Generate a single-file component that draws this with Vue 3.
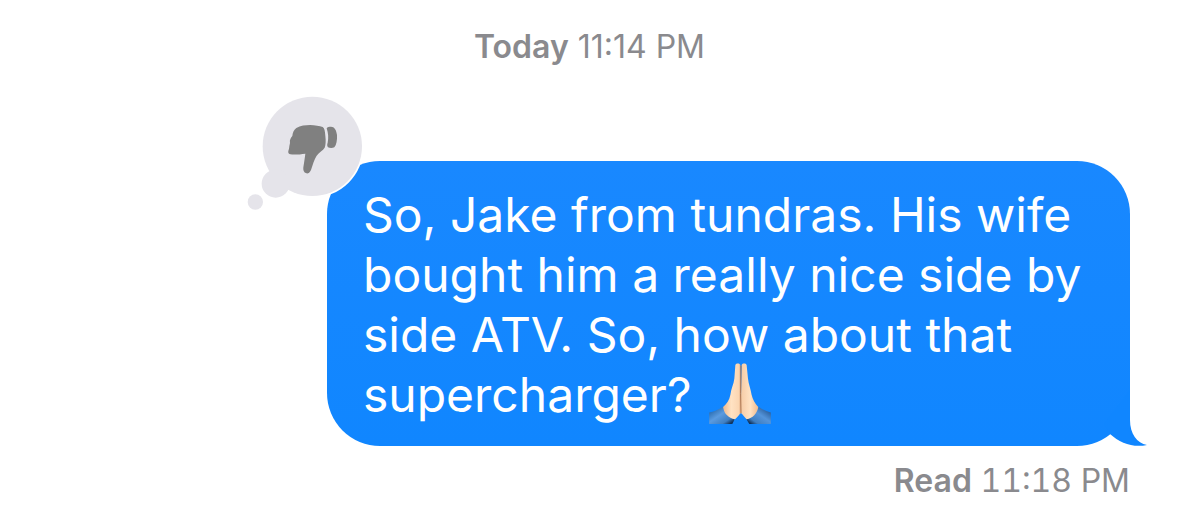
<script setup>
const lines = [
  'So, Jake from tundras. His wife',
  'bought him a really nice side by',
  'side ATV. So, how about that',
]
</script>

<template>
  <main class="thread">
    <header class="stamp"><strong>Today</strong> <time>11:14 PM</time></header>

    <article class="bubble">
      <p class="message">
        <template v-for="line in lines" :key="line">{{ line }}<br /></template>supercharger?
        <svg class="emoji" viewBox="60 38 186 187" role="img" aria-label="Folded hands">
          <defs>
            <linearGradient id="sleeveL" x1="0" y1="0" x2="1" y2="1">
              <stop offset="0.15" stop-color="#2b6db0" />
              <stop offset="0.45" stop-color="#5a9be0" />
              <stop offset="0.75" stop-color="#3f7fc2" />
              <stop offset="0.9" stop-color="#12335c" />
            </linearGradient>
            <linearGradient id="sleeveR" x1="1" y1="0" x2="0" y2="1">
              <stop offset="0.15" stop-color="#2a5f9c" />
              <stop offset="0.45" stop-color="#5494da" />
              <stop offset="0.75" stop-color="#3f7fc2" />
              <stop offset="0.9" stop-color="#12335c" />
            </linearGradient>
            <linearGradient id="skinL" x1="0" y1="0" x2="1" y2="0">
              <stop offset="0" stop-color="#efb98c" />
              <stop offset="0.45" stop-color="#ffe2c3" />
              <stop offset="0.85" stop-color="#fbd6b2" />
              <stop offset="1" stop-color="#dca47a" />
            </linearGradient>
            <linearGradient id="skinR" x1="1" y1="0" x2="0" y2="0">
              <stop offset="0" stop-color="#efb98c" />
              <stop offset="0.45" stop-color="#ffe2c3" />
              <stop offset="1" stop-color="#f6cba5" />
            </linearGradient>
          </defs>
          <path fill="url(#sleeveL)" d="M60 187C73 185 88 179 101 170C103 186 117 202 137 207L130 222H60Z" />
          <path fill="url(#sleeveR)" d="M246 187C233 184 220 179 209 170C206 186 192 201 172 207L181 222H246Z" />
          <path fill="url(#skinL)" d="M139 44C142 38 151 38 154 44L157 188C151 193 146 200 138 208C118 205 104 190 102 171C113 162 121 150 124 134C126 115 134 103 136 85Z" />
          <path fill="url(#skinR)" d="M158 44C161 38 170 38 173 44L177 85C179 103 185 115 188 134C191 147 198 161 208 171C205 191 191 205 173 208C166 200 161 193 155 188Z" />
          <path fill="none" stroke="#a87350" stroke-width="3" stroke-linecap="round" d="M156 47L155 130L156 188" />
        </svg>
      </p>

      <svg class="tail" viewBox="1100 390 50 56" aria-hidden="true">
        <path fill="#1086ff" d="M1130 390V420C1130 434 1137 443 1147 445C1133 448 1120 443 1110 434L1104 424Z" />
      </svg>

      <svg class="reaction" viewBox="0 0 480 420" role="img" aria-label="Disliked">
        <circle cx="232" cy="184" r="154" fill="#fff" />
        <g fill="#e5e4ea">
          <circle cx="232" cy="184" r="149" />
          <circle cx="122" cy="296" r="42" />
          <circle cx="61" cy="351" r="23" />
        </g>
        <g fill="#808080">
          <path d="M184 129C196 122 212 120 225 120C240 121 254 123 263 126C269 130 270 140 271 152C273 168 272 180 269 188C264 196 252 202 245 212C238 222 233 240 228 255C224 264 219 266 214 265C206 263 204 256 205 247C207 235 209 222 211 206C196 208 178 210 166 208C158 206 159 199 162 192C163 186 163 180 165 174C163 165 168 158 172 153C173 143 177 134 184 129Z" />
          <path d="M275 130C277 126 283 125 288 125C298 125 304 134 306 150C307 166 304 180 298 187C293 190 284 190 279 187C276 183 276 178 278 173C281 158 280 145 275 130Z" />
        </g>
      </svg>
    </article>

    <footer class="receipt"><strong>Read</strong> <time>11:18 PM</time></footer>
  </main>
</template>

<style>
body {
  margin: 0;
  background: #fff;
}
</style>

<style scoped>
.thread {
  display: flex;
  flex-direction: column;
  padding: 27px 49px 0;
  font-family: Inter, "Liberation Sans", sans-serif;
}

.stamp,
.receipt {
  color: #8a8a8e;
  font-size: 32px;
  line-height: 40px;
  white-space: nowrap;
}

.stamp {
  align-self: center;
}

.receipt {
  align-self: flex-end;
  margin-top: 15px;
  font-variant-numeric: tabular-nums;
}

strong {
  font-weight: 600;
}

.bubble {
  position: relative;
  align-self: flex-end;
  box-sizing: border-box;
  width: 803px;
  max-width: 100%;
  margin-top: 94px;
  padding: 24px 36px 21px;
  border-radius: 53px;
  background: linear-gradient(#1988ff, #1086ff);
  color: #fff;
}

.message {
  margin: 0;
  font-size: 48px;
  line-height: 60px;
  white-space: nowrap;
}

.emoji {
  width: 62px;
  height: 62px;
  margin-top: -6px;
  margin-left: 4px;
  vertical-align: -13px;
}

.tail {
  position: absolute;
  right: -20px;
  bottom: 0;
  width: 50px;
  height: 56px;
}

.reaction {
  position: absolute;
  left: -92px;
  top: -76px;
  width: 160px;
  height: 140px;
}
</style>
